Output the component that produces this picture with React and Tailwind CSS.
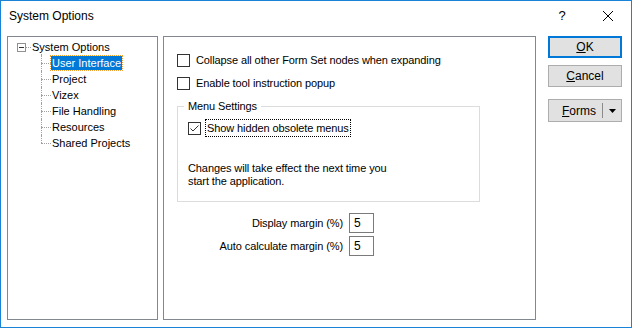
import { useState } from "react";

const font = { fontFamily: '"Segoe UI", "Liberation Sans", Arial, sans-serif' };

function Check({ checked }) {
  return (
    <span className="w-[13px] h-[13px] border border-[#333333] bg-white flex items-center justify-center shrink-0">
      {checked && (
        <svg width="11" height="11" viewBox="0 0 11 11">
          <path d="M1.5 5.5 L4 8 L9.5 2.5" fill="none" stroke="#333" strokeWidth="1" />
        </svg>
      )}
    </span>
  );
}

function TreeItem({ label, selected, last }) {
  return (
    <div className="relative h-[16px] flex items-center pl-[43px]">
      <span className="absolute left-[33px] top-[8px] w-[10px] border-t border-dotted border-[#a0a0a0]" />
      {!last && <span className="absolute left-[33px] top-0 h-[16px] border-l border-dotted border-[#a0a0a0]" />}
      {last && <span className="absolute left-[33px] top-0 h-[8px] border-l border-dotted border-[#a0a0a0]" />}
      <span
        className={
          selected
            ? "bg-[#0078d7] text-white px-[1px] leading-[14px] outline outline-1 outline-dotted outline-[#f0a030]"
            : "px-[1px] leading-[14px]"
        }
      >
        {label}
      </span>
    </div>
  );
}

function Btn({ children, primary, className = "" }) {
  return (
    <div
      className={
        "h-[22px] bg-[#e1e1e1] flex items-center justify-center text-[12px] text-black " +
        (primary ? "border-2 border-[#0078d7] " : "border border-[#adadad] ") +
        className
      }
    >
      {children}
    </div>
  );
}

export default function App() {
  const [display, setDisplay] = useState("5");
  const [auto, setAuto] = useState("5");
  const items = ["User Interface", "Project", "Vizex", "File Handling", "Resources", "Shared Projects"];

  return (
    <div className="w-[632px] h-[328px] bg-white border border-[#1883d7] flex flex-col text-black" style={font}>
      {/* title bar */}
      <div className="h-[35px] flex items-center pl-[8px] pb-[5px] text-[12px]">
        <span className="flex-1">System Options</span>
        <span className="w-[20px] text-center text-[13px] mr-[30px]">?</span>
        <svg width="12" height="12" viewBox="0 0 12 12" className="mr-[17px]">
          <path d="M1 1 L11 11 M11 1 L1 11" stroke="#000" strokeWidth="1" />
        </svg>
      </div>

      <div className="flex pl-[6px] gap-[5px]">
        {/* tree */}
        <div className="w-[151px] h-[284px] border border-[#828790] pt-[2px] text-[11px]">
          <div className="relative h-[16px] flex items-center pl-[23px]">
            <span className="absolute left-[9px] top-[4px] w-[9px] h-[9px] border border-[#919191] bg-white flex items-center justify-center">
              <span className="w-[5px] border-t border-[#333]" />
            </span>
            <span className="absolute left-[18px] top-[8px] w-[5px] border-t border-dotted border-[#a0a0a0]" />
            <span className="absolute left-[33px] top-[13px] h-[3px] border-l border-dotted border-[#a0a0a0]" />
            <span className="px-[1px]">System Options</span>
          </div>
          {items.map((it, i) => (
            <TreeItem key={it} label={it} selected={i === 0} last={i === items.length - 1} />
          ))}
        </div>

        {/* content */}
        <div className="w-[373px] h-[284px] border border-[#828790] pl-[13px] pt-[17px] text-[11px] tracking-[-0.1px]">
          <div className="flex items-center gap-[6px] h-[13px]">
            <Check />
            <span>Collapse all other Form Set nodes when expanding</span>
          </div>
          <div className="flex items-center gap-[6px] h-[13px] mt-[10px]">
            <Check />
            <span>Enable tool instruction popup</span>
          </div>

          <div className="relative mt-[16px] w-[303px] h-[96px] border border-[#dcdcdc]">
            <span className="absolute -top-[9px] left-[6px] bg-white px-[4px] leading-[16px]">Menu Settings</span>
            <div className="flex items-center gap-[6px] mt-[13px] ml-[10px]">
              <Check checked />
              <span className="outline outline-1 outline-dotted outline-black px-[1px] leading-[16px] -ml-[1px]">Show hidden obsolete menus</span>
            </div>
            <div className="ml-[10px] mt-[26px] leading-[13px]">
              Changes will take effect the next time you
              <br />
              start the application.
            </div>
          </div>

          <div className="mt-[11px] flex flex-col items-end w-[197px] gap-[3px]">
            <div className="flex items-center gap-[6px]">
              <span>Display margin (%)</span>
              <input
                value={display}
                onChange={(e) => setDisplay(e.target.value)}
                className="w-[25px] h-[20px] border border-[#7a7a7a] px-[4px] text-[12px] outline-none"
              />
            </div>
            <div className="flex items-center gap-[6px]">
              <span>Auto calculate margin (%)</span>
              <input
                value={auto}
                onChange={(e) => setAuto(e.target.value)}
                className="w-[25px] h-[20px] border border-[#7a7a7a] px-[4px] text-[12px] outline-none"
              />
            </div>
          </div>
        </div>

        {/* buttons */}
        <div className="ml-[7px] w-[74px] flex flex-col">
          <Btn primary>
            <span><u>O</u>K</span>
          </Btn>
          <Btn className="mt-[7px]">
            <span><u>C</u>ancel</span>
          </Btn>
          <div className="mt-[12px] h-[23px] bg-[#e1e1e1] border border-[#adadad] flex items-center text-[12px]">
            <span className="flex-1 text-right pr-[6px]"><u>F</u>orms</span>
            <span className="h-[15px] border-l border-[#8a8a8a]" />
            <span className="w-[18px] flex justify-center">
              <svg width="7" height="4" viewBox="0 0 7 4"><path d="M0 0 H7 L3.5 4 Z" fill="#000" /></svg>
            </span>
          </div>
        </div>
      </div>
    </div>
  );
}
